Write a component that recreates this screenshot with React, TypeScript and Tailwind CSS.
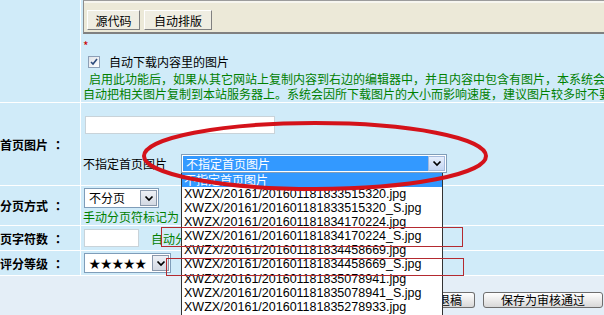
import React from 'react'

const files = [
  'XWZX/20161/201601181833515320.jpg',
  'XWZX/20161/201601181833515320_S.jpg',
  'XWZX/20161/201601181834170224.jpg',
  'XWZX/20161/201601181834170224_S.jpg',
  'XWZX/20161/201601181834458669.jpg',
  'XWZX/20161/201601181834458669_S.jpg',
  'XWZX/20161/201601181835078941.jpg',
  'XWZX/20161/201601181835078941_S.jpg',
  'XWZX/20161/201601181835278933.jpg',
]

const Chevron = () => (
  <svg width="10" height="7" viewBox="0 0 10 7">
    <path d="M1.5 1.5l3.5 3.5 3.5-3.5" fill="none" stroke="#000" strokeWidth="1.7" />
  </svg>
)

const Label = ({ text }: { text: string }) => (
  <div className="w-[81px] shrink-0 border-r border-white flex items-center justify-end pr-[16px] overflow-hidden">
    <span className="shrink-0 whitespace-nowrap font-bold">
      {text}
      <span className="ml-[4px] font-['Noto_Sans_CJK_JP',sans-serif]">：</span>
    </span>
  </div>
)

const SmallSelect = ({ value, width }: { value: string; width: string }) => (
  <div className={`${width} h-[20px] ml-[1px] flex border border-[#7f9db9] bg-white`}>
    <div className="flex-1 pl-[4px] leading-[18px] whitespace-nowrap overflow-hidden">{value}</div>
    <div className="w-[17px] m-px flex items-center justify-center border border-[#8a98ab] bg-linear-to-b from-[#eef1f6] to-[#d3d9e3]">
      <Chevron />
    </div>
  </div>
)

export default function App() {
  return (
    <div className="relative w-[604px] h-[315px] overflow-hidden bg-[#d0ebf9] text-[12px] leading-[15px] text-black font-['Noto_Sans_CJK_SC',sans-serif]">
      {/* editor toolbar + auto download */}
      <div className="flex h-[103px] border-b border-white">
        <div className="w-[81px] shrink-0 border-r border-white" />
        <div className="flex-1 min-w-0 pl-[2px] overflow-hidden">
          <div className="h-[34px] border-l border-l-[#8c8c8c] border-t border-t-[#9c9c9c] border-b-2 border-b-[#808080] bg-[#ece9d8]">
            <div className="h-[31px] border-t-2 border-t-[#f7f6f0] flex items-start gap-[4px] pl-[3px] pt-[7px]">
              <div className="w-[53px] h-[20px] flex items-center justify-center border border-t-white border-l-white border-r-[#808080] border-b-[#808080] bg-[#efede2]">
                源代码
              </div>
              <div className="w-[68px] h-[20px] flex items-center justify-center border border-t-white border-l-white border-r-[#808080] border-b-[#808080] bg-[#efede2]">
                自动排版
              </div>
            </div>
          </div>
          <div className="h-[18px] pt-[4px] text-[#cc0000]">*</div>
          <div className="h-[19px] flex items-center">
            <div className="ml-[5px] w-[12px] h-[12px] border border-[#8d9fb6] bg-linear-to-br from-[#dfe3e9] to-white flex items-center justify-center">
              <svg width="8" height="8" viewBox="0 0 8 8">
                <path d="M1 4l2 2 4-5" fill="none" stroke="#2d4b7c" strokeWidth="1.6" />
              </svg>
            </div>
            <span className="ml-[9px] whitespace-nowrap">自动下载内容里的图片</span>
          </div>
          <div className="text-[#008000] whitespace-nowrap">
            <div className="pl-[6px]">启用此功能后，如果从其它网站上复制内容到右边的编辑器中，并且内容中包含有图片，本系统会</div>
            <div>自动把相关图片复制到本站服务器上。系统会因所下载图片的大小而影响速度，建议图片较多时不要</div>
          </div>
        </div>
      </div>

      {/* 首页图片 */}
      <div className="flex h-[83px] border-b border-white">
        <Label text="首页图片" />
        <div className="flex-1 min-w-0 pl-[2px] pt-[13px]">
          <div className="ml-[2px] w-[190px] h-[18px] bg-white border border-[#c9d3d9]" />
          <div className="mt-[20px] flex items-center">
            <span className="whitespace-nowrap">不指定首页图片</span>
            <div className="relative ml-[14px] w-[266px] h-[19px] flex border border-[#7f9db9] bg-white p-px">
              <div className="flex-1 bg-[#3399ff] text-white pl-[3px] leading-[15px]">不指定首页图片</div>
              <div className="w-[17px] flex items-center justify-center border border-[#a4b9dc] bg-linear-to-b from-[#e6eefc] to-[#c4d6f2]">
                <Chevron />
              </div>
              <div className="absolute left-[-1px] top-[18px] w-[262px] h-[150px] bg-white border-x border-[#333]">
                <div className="h-[14px] bg-[#3399ff] text-white pl-[2px] leading-[14px]">不指定首页图片</div>
                {files.map(f => (
                  <div key={f} className="h-[14.1px] pl-[2px] leading-[14.1px] text-[12.5px] whitespace-nowrap font-['Liberation_Sans',Arial,sans-serif]">
                    {f}
                  </div>
                ))}
              </div>
            </div>
          </div>
        </div>
      </div>

      {/* 分页方式 */}
      <div className="flex h-[40px] border-b border-white">
        <Label text="分页方式" />
        <div className="flex-1 min-w-0 pl-[2px] pt-[2px]">
          <SmallSelect value="不分页" width="w-[75px]" />
          <div className="mt-[1px] w-[98px] overflow-hidden text-[#008000] whitespace-nowrap">手动分页符标记为</div>
        </div>
      </div>

      {/* 每页字符数 */}
      <div className="flex h-[25px] border-b border-white">
        <Label text="每页字符数" />
        <div className="flex-1 min-w-0 pl-[2px] flex items-center">
          <div className="ml-[1px] w-[55px] h-[18px] bg-white border border-[#c9d3d9]" />
          <span className="ml-[12px] w-[30px] overflow-hidden text-[#008000] whitespace-nowrap">自动分</span>
        </div>
      </div>

      {/* 评分等级 */}
      <div className="flex h-[25px] border-b border-white">
        <Label text="评分等级" />
        <div className="flex-1 min-w-0 pl-[2px] flex items-center">
          <div className="w-[87px] h-[20px] ml-[1px] flex border border-[#7f9db9] bg-white">
            <div className="flex-1 pl-[4px] leading-[18px] text-[11.5px] whitespace-nowrap overflow-hidden">★★★★★</div>
            <div className="w-[17px] m-px flex items-center justify-center border border-[#8a98ab] bg-linear-to-b from-[#eef1f6] to-[#d3d9e3]">
              <Chevron />
            </div>
          </div>
        </div>
      </div>

      {/* buttons */}
      <div className="h-[40px] bg-[#e4eef7] flex justify-end items-start gap-[8px] pt-[16px] pr-px">
        <div className="h-[16px] w-[40px] pl-[3px] leading-[14px] rounded-r-[3px] border border-l-0 border-[#6e6e6e] bg-linear-to-b from-white to-[#d8d8d8] whitespace-nowrap">
          退稿
        </div>
        <div className="h-[16px] w-[120px] leading-[14px] text-center rounded-[3px] border border-[#6e6e6e] bg-linear-to-b from-white to-[#d8d8d8] whitespace-nowrap">
          保存为审核通过
        </div>
      </div>

      {/* annotations */}
      <div className="absolute left-[161px] top-[227px] w-[302px] h-[20px] border-[1.5px] border-[#b42a30]" />
      <div className="absolute left-[166px] top-[258px] w-[298px] h-[18px] border-[1.5px] border-[#b42a30]" />
      <svg className="absolute left-0 top-0 pointer-events-none" width="604" height="315" viewBox="0 0 604 315">
        <ellipse cx="315" cy="156" rx="171" ry="33" fill="none" stroke="#d4121a" strokeWidth="4" />
      </svg>
    </div>
  )
}
